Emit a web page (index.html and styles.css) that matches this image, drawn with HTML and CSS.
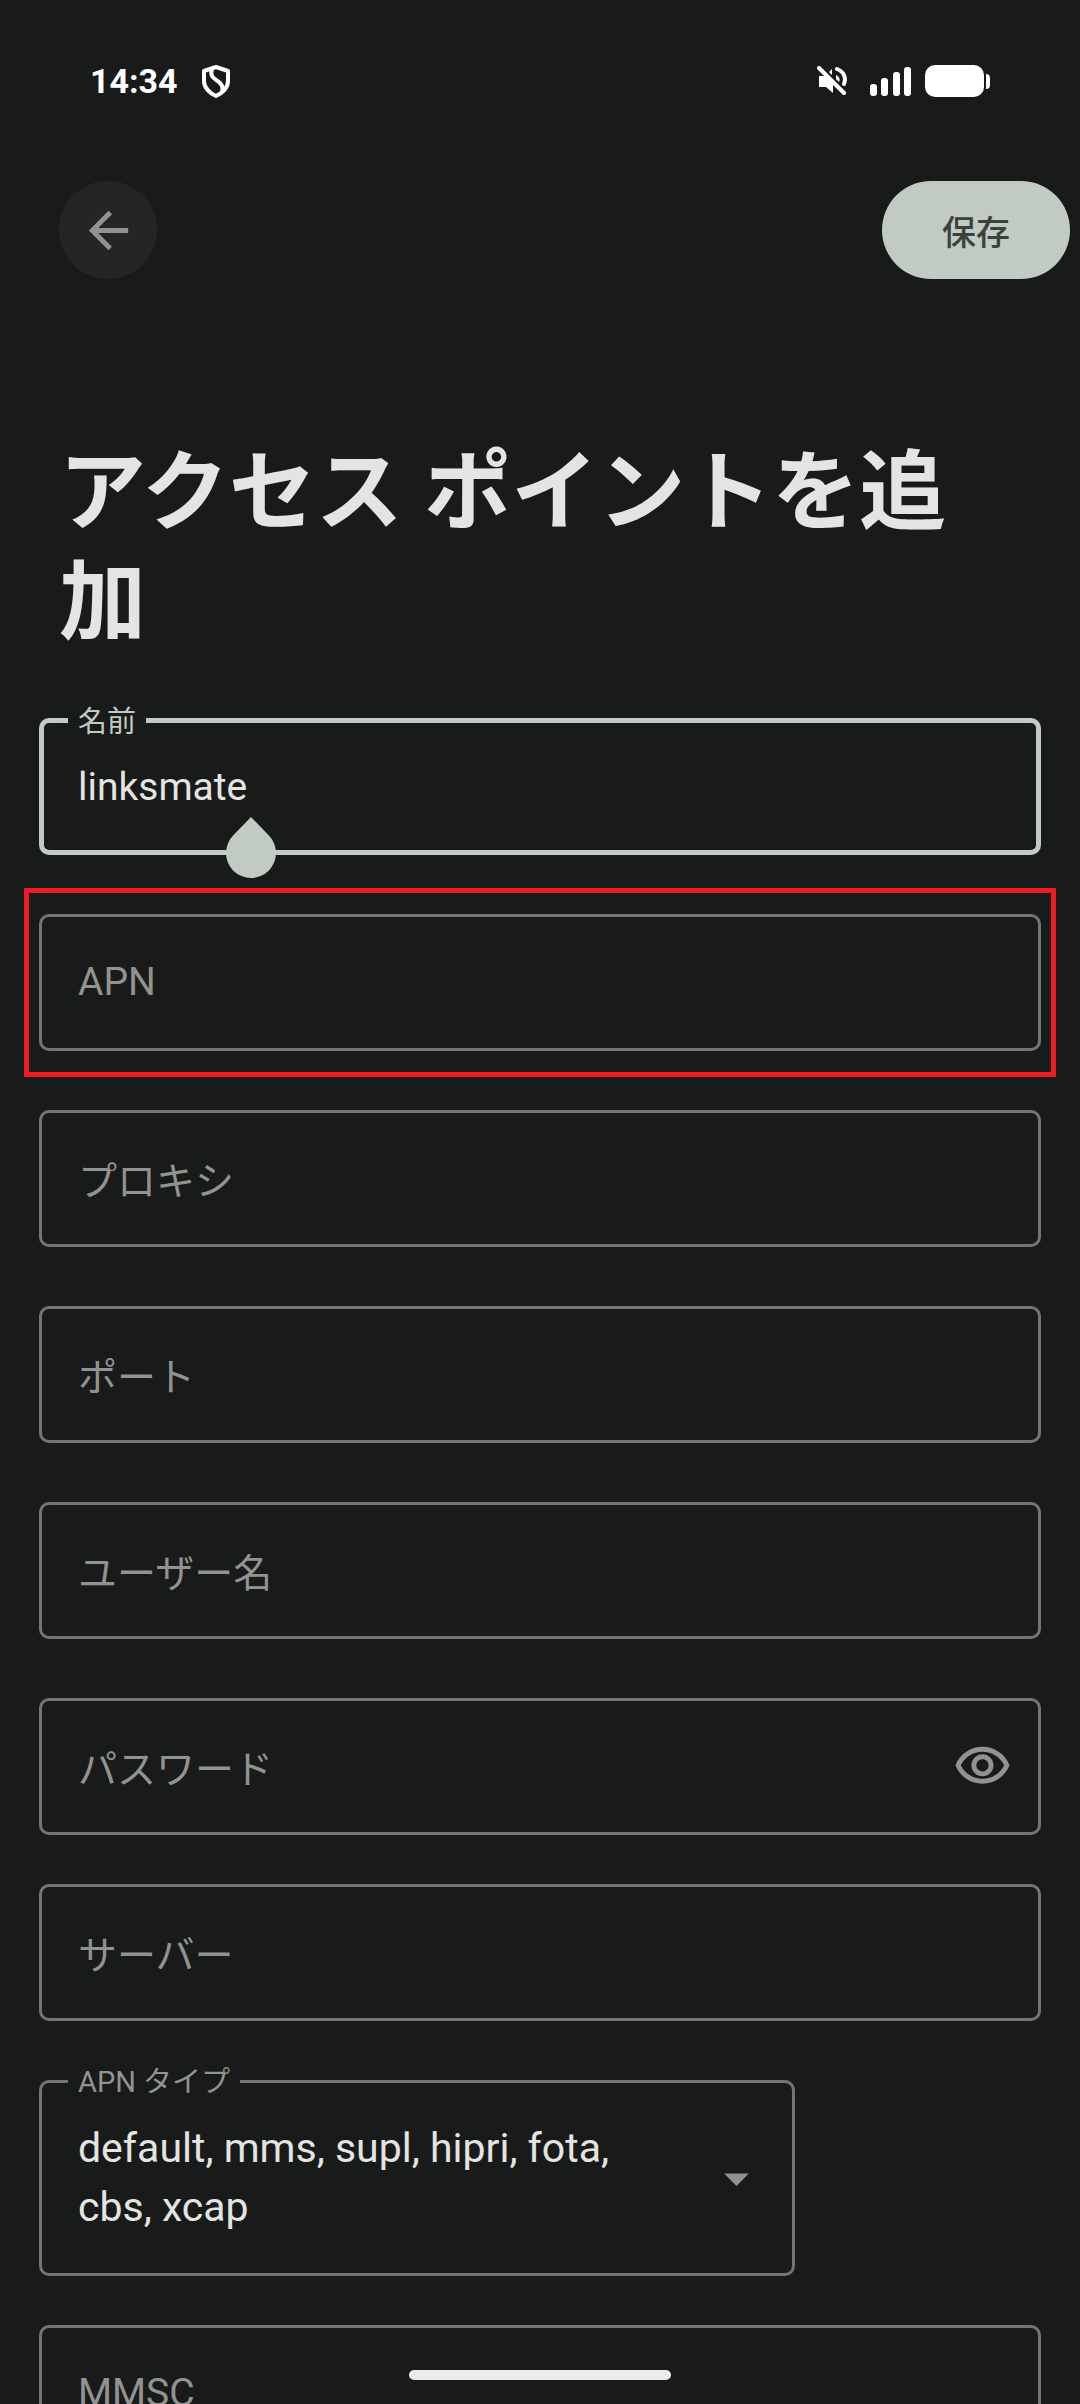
FILE: index.html
```html
<!DOCTYPE html>
<html lang="ja">
    <head>
        <meta charset="UTF-8">
        <meta name="viewport" content="width=device-width, initial-scale=1">
        <title>アクセス ポイントを追加</title>
        <link rel="stylesheet" href="styles.css">
    </head>
    <body>
        <div class="screen">
            <div class="status">
                <span class="time">14:34</span>
                <svg class="shield" viewBox="0 0 28 33" width="28" height="33">
                    <path d="M14 2 L26 6 V16 C26 23 20 28.500 14 31 C8 28.500 2 23 2 16 V6 Z"/>
                    <path d="M10 4 C7 13 14 14 18 18 C21 21 21 24 20 27"/>
                </svg>
                <div class="status-right">
                    <svg class="mute" viewBox="0 0 30 30" width="30" height="30">
                        <path class="fill" d="M2 10 H8 L16 18 V27 L9 21 H2 Z M15 3 V9 L12 6 Z"/>
                        <path class="line" d="M20 3 C28 6 29 13 27 18"/>
                        <path class="fill" d="M19 9 C23 11 23 14 22 16 L19 13 Z"/>
                        <path class="line" d="M2 2 L27 27"/>
                    </svg>
                    <svg class="signal" viewBox="0 0 41 29" width="41" height="29">
                        <rect x="0" y="17" width="7" height="12" rx="3"/>
                        <rect x="11" y="11" width="7" height="18" rx="3"/>
                        <rect x="23" y="5" width="7" height="24" rx="3"/>
                        <rect x="34" y="0" width="7" height="29" rx="3"/>
                    </svg>
                    <svg class="battery" viewBox="0 0 65 32" width="65" height="32">
                        <rect x="0" y="0" width="59" height="32" rx="10"/>
                        <path d="M61 9 Q65 9 65 13 V20 Q65 24 61 24 Z"/>
                    </svg>
                </div>
            </div>

            <header class="toolbar">
                <button class="back" type="button" aria-label="戻る">
                    <svg viewBox="0 0 24 24" width="59" height="59"><path d="M20 11H7.830l5.590-5.590L12 4l-8 8 8 8 1.410-1.410L7.830 13H20v-2z"/></svg>
                </button>
                <button class="save" type="submit" form="apn-form">保存</button>
            </header>

            <h1>アクセス ポイントを追加</h1>

            <form class="apn-form" id="apn-form">
                <div class="field active">
                    <label class="float" for="name">名前</label>
                    <input type="text" id="name" name="name" value="linksmate">
                    <svg class="handle" viewBox="0 0 50 61" width="50" height="61"><path d="M25 0 L42.700 18.300 A25 25 0 1 1 7.300 18.300 Z"/></svg>
                </div>
                <div class="field marked">
                    <input type="text" id="apn" name="apn">
                    <label for="apn">APN</label>
                </div>
                <div class="field">
                    <input type="text" id="proxy" name="proxy">
                    <label class="kana" for="proxy">プロキシ</label>
                </div>
                <div class="field">
                    <input type="text" id="port" name="port">
                    <label class="kana" for="port">ポート</label>
                </div>
                <div class="field">
                    <input type="text" id="user" name="user">
                    <label class="kana" for="user">ユーザー名</label>
                </div>
                <div class="field tight">
                    <input type="password" id="pwd" name="pwd">
                    <label class="kana" for="pwd">パスワード</label>
                    <button class="eye" type="button" aria-label="パスワードを表示">
                        <svg viewBox="0 0 24 24" width="59" height="59"><path d="M12 6c3.790 0 7.170 2.130 8.820 5.500C19.170 14.870 15.790 17 12 17s-7.170-2.130-8.820-5.500C4.830 8.130 8.210 6 12 6m0-2C7 4 2.730 7.110 1 11.500 2.730 15.890 7 19 12 19s9.270-3.110 11-7.500C21.270 7.110 17 4 12 4zm0 5c1.380 0 2.500 1.120 2.500 2.500S13.380 14 12 14s-2.500-1.120-2.500-2.500S10.620 9 12 9m0-2c-2.480 0-4.500 2.020-4.500 4.500S9.520 16 12 16s4.500-2.020 4.500-4.500S14.480 7 12 7z"/></svg>
                    </button>
                </div>
                <div class="field">
                    <input type="text" id="server" name="server">
                    <label class="kana" for="server">サーバー</label>
                </div>
                <div class="field type tight">
                    <label class="float" for="type">APN タイプ</label>
                    <select id="type" name="type">
                        <option>default, mms, supl, hipri, fota, cbs, xcap</option>
                    </select>
                    <svg class="arrow" viewBox="0 0 24 24" width="59" height="59"><path d="M7 10l5 5 5-5z"/></svg>
                </div>
                <div class="field">
                    <input type="text" id="mmsc" name="mmsc">
                    <label for="mmsc">MMSC</label>
                </div>
            </form>
        </div>
        <div class="gesture"></div>
    </body>
</html>
```
FILE: styles.css
```css
* {
    box-sizing: border-box;
}
body {
    margin: 0;
    background-color: #191b1a;
    color: #e4e4e2;
    font-family: Roboto, "Noto Sans CJK JP", sans-serif;
    font-size: 39px;
    line-height: 59px;
}
.screen {
    height: 100vh;
    overflow: hidden;
}
button, input, select {
    margin: 0;
    padding: 0;
    border: none;
    outline: none;
    background: none;
    color: inherit;
    font: inherit;
}

/* status bar */
.status {
    display: flex;
    align-items: center;
    height: 162px;
    padding: 0 90px;
    color: #fff;
}
.time {
    font-size: 34px;
    font-weight: 700;
}
.shield {
    margin-left: 24px;
    fill: none;
    stroke: #fff;
    stroke-width: 4;
    stroke-linejoin: round;
}
.status-right {
    display: flex;
    align-items: center;
    margin-left: auto;
    fill: #fff;
}
.mute .line {
    fill: none;
    stroke: #fff;
    stroke-width: 4;
    stroke-linecap: round;
}
.signal {
    margin: 0 14px 0 23px;
}

/* toolbar */
.toolbar {
    display: flex;
    justify-content: space-between;
    padding: 19px 10px 0 59px;
}
.back {
    display: flex;
    align-items: center;
    justify-content: center;
    width: 98px;
    height: 98px;
    border-radius: 50%;
    background-color: #242625;
    fill: #919391;
}
.save {
    width: 188px;
    height: 98px;
    border-radius: 49px;
    background-color: #c1cac3;
    color: #3b423d;
    font-family: "Noto Sans CJK JP", sans-serif;
    font-size: 34px;
    font-weight: 500;
}
h1 {
    margin: 159px 59px 60px;
    font-size: 87px;
    font-weight: 700;
    line-height: 110px;
}

/* form */
.apn-form {
    padding: 0 39px;
}
.field {
    position: relative;
    display: grid;
    margin-bottom: 59px;
    border: 3px solid #737573;
    border-radius: 10px;
}
.field.tight {
    margin-bottom: 49px;
}
.field > input,
.field > label,
.field > select {
    grid-area: 1 / 1;
}
.field > input,
.field > label {
    padding: 36px;
}
.field > input {
    width: 100%;
    height: 131px;
}
.field > label {
    color: #919391;
    pointer-events: none;
}
.field > .kana {
    font-family: "Noto Sans CJK JP", sans-serif;
}
.field > .float {
    position: absolute;
    top: -21px;
    left: 26px;
    padding: 0 10px;
    background-color: #191b1a;
    font-size: 29px;
    line-height: 40px;
}
.field.active {
    border: 5px solid #c1cac3;
}
.active > input {
    height: 127px;
    padding: 34px;
}
.active > .float {
    left: 24px;
    color: #c1cac3;
}
.handle {
    position: absolute;
    top: 94px;
    left: 182px;
    fill: #c1cac3;
}
.marked::after {
    content: "";
    position: absolute;
    inset: -29px -18px;
    border: 5px solid #ed1c24;
    pointer-events: none;
}
.eye,
.arrow {
    grid-area: 1 / 1;
    align-self: center;
    justify-self: end;
    width: 59px;
    height: 59px;
    margin-right: 26px;
    fill: #919391;
}
.eye {
    display: flex;
}
.arrow {
    pointer-events: none;
}
.type {
    width: 756px;
    max-width: 100%;
}
.type select {
    width: 100%;
    height: 190px;
    padding: 36px 120px 36px 36px;
    appearance: none;
    font-size: 41px;
    white-space: pre-wrap;
}

/* home gesture bar */
.gesture {
    position: fixed;
    left: 50%;
    bottom: 24px;
    width: 262px;
    height: 10px;
    margin-left: -131px;
    border-radius: 5px;
    background-color: #ececec;
}
```
